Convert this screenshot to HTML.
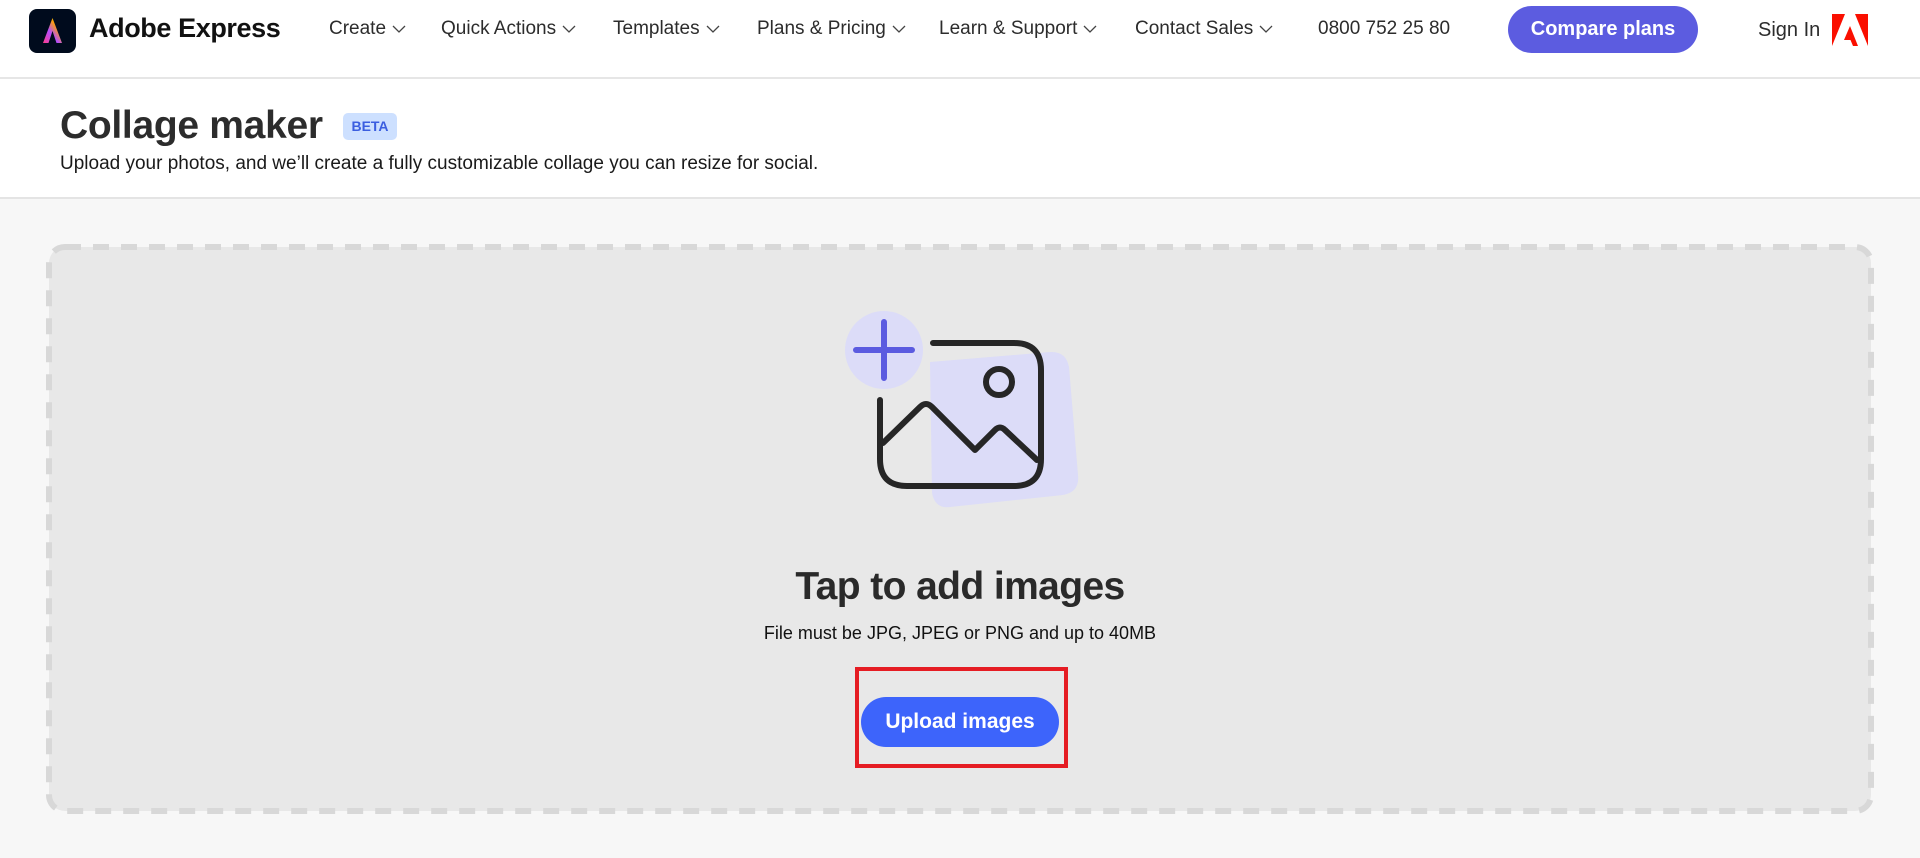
<!DOCTYPE html>
<html><head><meta charset="utf-8"><style>
*{margin:0;padding:0;box-sizing:border-box}
body{width:1920px;height:858px;overflow:hidden;background:#f7f7f7;font-family:"Liberation Sans",sans-serif;color:#222;position:relative}
.hdr{position:absolute;left:0;top:0;width:1920px;height:79px;background:#fff;border-bottom:2px solid #e6e6e6}
.a{position:absolute;white-space:nowrap}
.nav{font-size:19px;color:#2c2c2c;top:18px}
.nav svg{margin-left:6px;vertical-align:middle}
.sub{position:absolute;left:0;top:79px;width:1920px;height:120px;background:#fff;border-bottom:2px solid #e4e4e4}
</style></head><body>
<div class="hdr">
 <div class="a" style="left:29px;top:9px;width:47px;height:44px;background:#000b1d;border-radius:8px">
  <svg width="47" height="44" viewBox="0 0 47 44"><defs><linearGradient id="g" x1="0" y1="1" x2="1" y2="0"><stop offset="0" stop-color="#ff3d8b"/><stop offset=".4" stop-color="#b44dff"/><stop offset=".7" stop-color="#ffa400"/><stop offset="1" stop-color="#22d37a"/></linearGradient></defs><path d="M23.5 9 L33 34 L27.5 34 L23.5 22 L19.5 34 L14 34 Z" fill="url(#g)"/></svg>
 </div>
 <div class="a" style="left:89px;top:13px;font-size:27px;font-weight:bold;color:#111;letter-spacing:-0.4px">Adobe Express</div>
 <div class="a nav" style="left:329px">Create<svg width="14" height="8"><path d="M1 1l6 6 6-6" fill="none" stroke="#444" stroke-width="1.3"/></svg></div>
 <div class="a nav" style="left:441px">Quick Actions<svg width="14" height="8"><path d="M1 1l6 6 6-6" fill="none" stroke="#444" stroke-width="1.3"/></svg></div>
 <div class="a nav" style="left:613px">Templates<svg width="14" height="8"><path d="M1 1l6 6 6-6" fill="none" stroke="#444" stroke-width="1.3"/></svg></div>
 <div class="a nav" style="left:757px">Plans &amp; Pricing<svg width="14" height="8"><path d="M1 1l6 6 6-6" fill="none" stroke="#444" stroke-width="1.3"/></svg></div>
 <div class="a nav" style="left:939px">Learn &amp; Support<svg width="14" height="8"><path d="M1 1l6 6 6-6" fill="none" stroke="#444" stroke-width="1.3"/></svg></div>
 <div class="a nav" style="left:1135px">Contact Sales<svg width="14" height="8"><path d="M1 1l6 6 6-6" fill="none" stroke="#444" stroke-width="1.3"/></svg></div>
 <div class="a nav" style="left:1318px">0800 752 25 80</div>
 <div class="a" style="left:1508px;top:6px;width:190px;height:47px;border-radius:24px;background:#5c5ce0;color:#fff;font-size:20px;font-weight:bold;text-align:center;line-height:47px">Compare plans</div>
 <div class="a nav" style="left:1758px;top:19px;font-size:20px">Sign In</div>
 <svg class="a" style="left:1832px;top:14px" width="36" height="32" viewBox="0 0 36 32"><path d="M0 0h13L0 32z M23 0h13v32z M18 12l8 20h-5l-2.5-6H12z" fill="#fa0f00"/></svg>
</div>
<div class="sub">
 <div class="a" style="left:60px;top:25px;font-size:39px;font-weight:bold;color:#2c2c2c;letter-spacing:-0.3px">Collage maker</div>
 <div class="a" style="left:343px;top:34px;width:54px;height:27px;background:#cde0ff;border-radius:5px;color:#3b5ee0;font-size:14px;font-weight:bold;text-align:center;line-height:27px">BETA</div>
 <div class="a" style="left:60px;top:74px;font-size:19px;color:#1a1a1a">Upload your photos, and we’ll create a fully customizable collage you can resize for social.</div>
</div>
<svg class="a" style="left:46px;top:244px" width="1828" height="570"><rect x="3" y="3" width="1822" height="564" rx="16" fill="#e8e8e8" stroke="#d8d8d8" stroke-width="6" stroke-dasharray="16 12"/></svg>
<svg class="a" style="left:840px;top:300px" width="250" height="220" viewBox="840 300 250 220">
 <path d="M930 362 L1050 352 Q1066 351 1069 367 L1078 475 Q1080 492 1063 495 L950 507 Q935 509 932 493 Z" fill="#dcdcf8"/>
 <circle cx="884" cy="350" r="39" fill="#dcdcf8"/>
 <path d="M884 322v56M856 350h56" stroke="#5b5be0" stroke-width="6" stroke-linecap="round"/>
 <path d="M933 343H1014Q1041 343 1041 370V459Q1041 486 1014 486H907Q880 486 880 459V400" fill="none" stroke="#262626" stroke-width="6" stroke-linecap="round"/>
 <circle cx="999" cy="382" r="13" fill="none" stroke="#262626" stroke-width="6"/>
 <path d="M883 443L920 407Q926 401 932 407L975 450L995 430Q1000 425 1005 430L1037 460" fill="none" stroke="#262626" stroke-width="6" stroke-linecap="round" stroke-linejoin="round"/>
</svg>
<div class="a" style="left:0;width:1920px;text-align:center;top:565px;font-size:39px;font-weight:bold;color:#2a2a2a;letter-spacing:-0.6px">Tap to add images</div>
<div class="a" style="left:0;width:1920px;text-align:center;top:623px;font-size:18px;color:#111">File must be JPG, JPEG or PNG and up to 40MB</div>
<div class="a" style="left:855px;top:667px;width:213px;height:101px;border:4px solid #e51c23"></div>
<div class="a" style="left:861px;top:697px;width:198px;height:50px;border-radius:25px;background:#3d64fb;color:#fff;font-size:21px;font-weight:bold;text-align:center;line-height:50px">Upload images</div>
</body></html>
